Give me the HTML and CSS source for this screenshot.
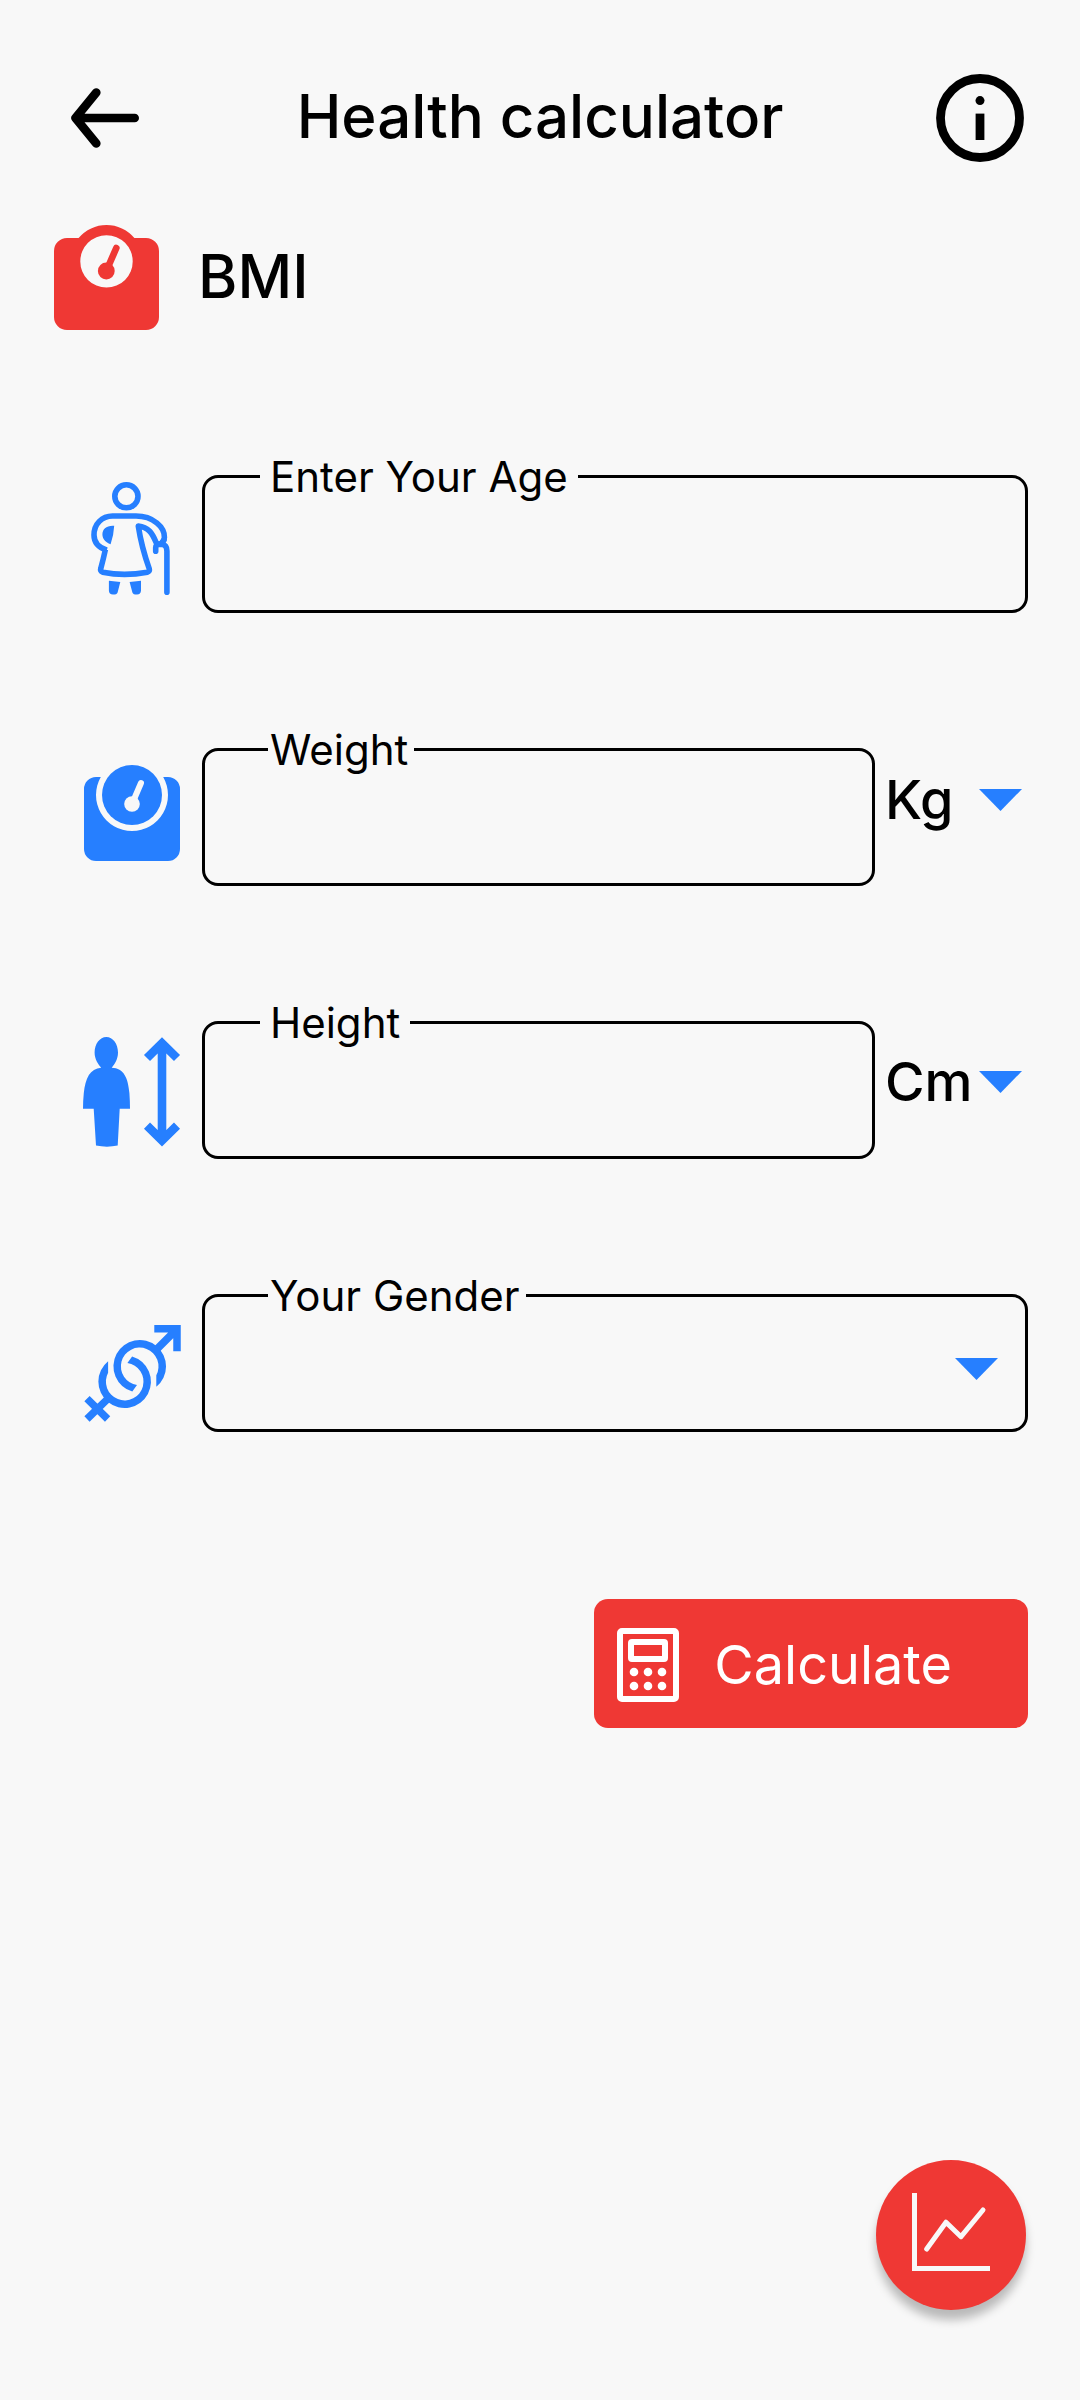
FILE: index.html
```html
<!DOCTYPE html>
<html lang="en">
<head>
<meta charset="utf-8">
<meta name="viewport" content="width=device-width, initial-scale=1">
<title>Health calculator</title>
<link rel="stylesheet" href="styles.css">
</head>
<body>
<div class="page">
  <header class="topbar">
    <button class="icon-button back" type="button" aria-label="Back">
      <svg width="68" height="60" viewBox="0 0 68 60" fill="none" stroke="currentColor" stroke-width="8.6" stroke-linecap="round" stroke-linejoin="round" aria-hidden="true"><path d="M63.7 30H4.5M25.3 4.5 4.5 30l20.8 25.5"/></svg>
    </button>
    <h1 class="title">Health calculator</h1>
    <button class="icon-button info" type="button" aria-label="Information">
      <svg width="88" height="88" viewBox="0 0 88 88" aria-hidden="true"><circle cx="44" cy="44" r="39.5" fill="none" stroke="currentColor" stroke-width="8.8"/><circle cx="44" cy="26.6" r="4.5"/><path d="M39.6 39.6h8.8V66h-8.8z"/></svg>
    </button>
  </header>

  <main class="content">
    <div class="section-head">
      <svg class="section-icon" width="105" height="105" viewBox="0 0 105 105" aria-hidden="true">
        <path fill="currentColor" fill-rule="evenodd" d="M13 13H24.6A36.5 36.5 0 0 1 80.4 13H92A13 13 0 0 1 105 26V92A13 13 0 0 1 92 105H13A13 13 0 0 1 0 92V26A13 13 0 0 1 13 13ZM52.5 10.2A26.2 26.2 0 1 0 52.5 62.6 26.2 26.2 0 1 0 52.5 10.2Z"/>
        <circle cx="52.3" cy="46" r="8.4" fill="currentColor"/>
        <path d="M52.3 46 62.3 23" stroke="currentColor" stroke-width="6.7" stroke-linecap="round"/>
      </svg>
      <h2 class="title">BMI</h2>
    </div>

    <form class="form">
      <div class="row">
        <svg class="row-icon" viewBox="0 0 120 138" fill="none" stroke="currentColor" stroke-width="5.6" stroke-linecap="round" stroke-linejoin="round" aria-hidden="true">
          <ellipse cx="54.4" cy="21.3" rx="11.6" ry="11.5"/>
          <path stroke-linecap="butt" d="M34.8 75.2C26.5 72.5 22 67 22 60C22 49 30 41 40.5 41H64C81 41 92.8 52 92.4 62.5C92 66 89.5 69.3 86.5 69.3C85.5 69.3 84.6 68.5 84 67.3C80.5 58.5 76.5 52 66.3 51Q69.5 72 77.2 93.6Q78 96.2 75.4 97.2Q52 101.5 30.8 97.2Q28 96 28.8 93.4Q31.5 83.5 33.4 74.5"/>
          <path d="M83.7 76.3V72.5Q83.8 69.5 87 69.5H90.2Q94.9 70 94.9 76V117.3M89 69 92 65"/>
          <path fill="currentColor" stroke="none" d="M42.2 50.8Q41.8 60 38.6 69.2C33.5 67.5 30.4 63.6 30.4 59.5C30.4 54 34.3 50.3 42.2 50.8ZM36.9 105.8 48.3 107 45.6 117.4Q44.7 119.6 41 119.6Q37 119.6 36.9 115.5ZM57.6 107 69 105.8V115.5Q68.8 119.6 65 119.6Q61.3 119.6 60.4 117.4Z"/>
        </svg>
        <fieldset class="field">
          <legend class="notch notch-wide"><label for="age">Enter Your Age</label></legend>
          <input class="control" id="age" type="text" inputmode="numeric">
        </fieldset>
      </div>

      <div class="row row-unit">
        <svg class="row-icon" viewBox="0 0 120 138" aria-hidden="true">
          <path fill="currentColor" d="M24 29H28.8A36 36 0 1 0 91.2 29H96A12 12 0 0 1 108 41V101A12 12 0 0 1 96 113H24A12 12 0 0 1 12 101V41A12 12 0 0 1 24 29Z"/>
          <circle cx="60" cy="47" r="30" fill="currentColor"/>
          <circle class="dial-mark" cx="60" cy="56" r="7.8"/>
          <path class="dial-needle" d="M60 56 69 35"/>
        </svg>
        <fieldset class="field">
          <legend class="notch notch-tight"><label for="weight">Weight</label></legend>
          <input class="control" id="weight" type="text" inputmode="decimal">
        </fieldset>
        <div class="unit unit-weight">
          <select class="unit-select" aria-label="Weight unit"><option>Kg</option><option>Lb</option></select>
          <svg class="caret" viewBox="0 0 43 22" aria-hidden="true"><path d="M0 0H43L21.5 22Z"/></svg>
        </div>
      </div>

      <div class="row row-unit">
        <svg class="row-icon" viewBox="0 0 120 138" fill="currentColor" aria-hidden="true">
          <path d="M34.3 16C41 16 46 23 46 31.5C46 38 42.8 43.2 39.7 46.7C52 47 56 57 57.4 72Q58 80 58 87.7H47.7L45.7 124.5Q35 126.8 24 124.5L21.7 87.7H11Q11 80 11.8 72C13.4 57 18 47.5 29.2 46.7C26 43.2 22.6 38 22.6 31.5C22.6 23 27.8 16 34.3 16Z"/>
          <path fill="none" stroke="currentColor" stroke-width="8.6" d="M90 22V119M75 37 90 22.2 105 37M75 104.6 90 119.4 105 104.6"/>
        </svg>
        <fieldset class="field">
          <legend class="notch notch-wide"><label for="height">Height</label></legend>
          <input class="control" id="height" type="text" inputmode="decimal">
        </fieldset>
        <div class="unit unit-height">
          <select class="unit-select" aria-label="Height unit"><option>Cm</option><option>Ft</option></select>
          <svg class="caret" viewBox="0 0 43 22" aria-hidden="true"><path d="M0 0H43L21.5 22Z"/></svg>
        </div>
      </div>

      <div class="row">
        <svg class="row-icon" viewBox="0 0 120 138" fill="none" stroke="currentColor" stroke-width="7.5" aria-hidden="true">
          <path fill="currentColor" stroke="none" d="M84.3 92.8A26.3 26.3 0 1 0 60.3 97.6L65 91A18.8 18.8 0 1 1 84.3 81.2Z"/>
          <path fill="currentColor" stroke="none" transform="rotate(180 60.2 80)" d="M84.3 92.8A26.3 26.3 0 1 0 60.3 97.6L65 91A18.8 18.8 0 1 1 84.3 81.2Z"/>
          <path d="M85 55 105 35M82.3 34.8H105V57.3M36 104.6 15 125M15 104.6 35.6 125"/>
        </svg>
        <fieldset class="field">
          <legend class="notch notch-tight"><label for="gender">Your Gender</label></legend>
          <select class="control" id="gender"><option value=""></option><option>Female</option><option>Male</option></select>
          <svg class="caret" viewBox="0 0 43 22" aria-hidden="true"><path d="M0 0H43L21.5 22Z"/></svg>
        </fieldset>
      </div>

      <button class="calculate" type="submit">
        <svg width="62" height="74" viewBox="0 0 62 74" fill="none" stroke="currentColor" stroke-width="6" stroke-linejoin="round" aria-hidden="true">
          <rect x="3" y="3" width="56" height="68" rx="2"/>
          <rect x="14" y="14" width="34" height="17" rx="1"/>
          <g fill="currentColor" stroke="none"><circle cx="17" cy="44" r="4.3"/><circle cx="31" cy="44" r="4.3"/><circle cx="45" cy="44" r="4.3"/><circle cx="17" cy="58" r="4.3"/><circle cx="31" cy="58" r="4.3"/><circle cx="45" cy="58" r="4.3"/></g>
        </svg>
        <span>Calculate</span>
      </button>
    </form>
  </main>

  <button class="fab" type="button" aria-label="History chart">
    <svg width="150" height="150" viewBox="0 0 150 150" fill="none" stroke="currentColor" stroke-width="5" aria-hidden="true"><path d="M38.5 33V108.5H114"/><path stroke-linecap="round" stroke-linejoin="round" d="M50.7 89 70 62.2 85 76.7 107 50"/></svg>
  </button>
</div>
</body>
</html>
```

FILE: styles.css
```css
:root {
  --bg: #f8f8f8;
  --ink: #000;
  --red: #ef3834;
  --blue: #267fff;
}

* {
  box-sizing: border-box;
}

body {
  margin: 0;
  background: var(--bg);
  color: var(--ink);
  font-family: Inter, "Liberation Sans", sans-serif;
}

button,
input,
select {
  margin: 0;
  padding: 0;
  border: 0;
  background: none;
  color: inherit;
  font: inherit;
}

button,
select {
  cursor: pointer;
}

svg {
  display: block;
}

.page {
  display: flex;
  flex-direction: column;
  min-height: 100vh;
  padding: 74px 52px 90px;
}

.topbar {
  display: grid;
  grid-template-columns: 1fr auto 1fr;
  align-items: center;
  padding: 0 4px;
}

.icon-button {
  display: block;
}

.back {
  justify-self: start;
  margin-left: 15px;
}

.info {
  justify-self: end;
}

.title {
  margin: 0;
  padding-bottom: 4px;
  font-size: 60px;
  font-weight: 500;
  line-height: 72px;
}

.section-head {
  display: flex;
  align-items: center;
  gap: 39px;
  margin-top: 63px;
  padding-left: 2px;
}

.section-icon {
  flex: none;
  color: var(--red);
}

.form {
  display: flex;
  flex-direction: column;
  gap: 111px;
  margin-top: 121px;
  padding-left: 20px;
}

.row {
  display: grid;
  grid-template-columns: 120px 1fr;
  column-gap: 10px;
  align-items: end;
}

.row-unit {
  grid-template-columns: 120px 1fr 143px;
}

.row-icon {
  width: 120px;
  height: 138px;
  color: var(--blue);
}

.dial-mark {
  fill: var(--bg);
}

.dial-needle {
  stroke: var(--bg);
  stroke-width: 6;
  stroke-linecap: round;
}

.field {
  position: relative;
  min-width: 0;
  margin: 0;
  padding: 0;
  border: 3px solid var(--ink);
  border-radius: 16px;
}

.notch {
  font-size: 42px;
  font-weight: 400;
  line-height: 51px;
}

.notch-wide {
  margin-left: 55px;
  padding: 0 10px;
}

.notch-tight {
  margin-left: 63px;
  padding: 0 6px 0 2px;
}

.control {
  display: block;
  width: 100%;
  height: 108px;
  padding: 0 65px 20px;
  border-radius: 12px;
  appearance: none;
  font-size: 42px;
  outline-offset: -6px;
}

.caret {
  position: absolute;
  top: 50%;
  right: 6px;
  width: 43px;
  height: 22px;
  transform: translateY(-50%);
  fill: var(--blue);
  pointer-events: none;
}

.field .caret {
  top: 37px;
  right: 27px;
  transform: none;
}

.unit {
  position: relative;
  align-self: start;
}

.unit-weight {
  margin-top: 43px;
}

.unit-height {
  margin-top: 52px;
}

.unit-select {
  display: block;
  width: 100%;
  height: 66px;
  appearance: none;
  font-size: 54px;
  font-weight: 500;
  line-height: 66px;
}

.calculate {
  display: flex;
  align-self: flex-end;
  align-items: center;
  gap: 35px;
  margin-top: 56px;
  padding: 29px 76px 26px 23px;
  border-radius: 14px;
  background: var(--red);
  color: #fff;
  font-size: 54px;
  font-weight: 400;
  line-height: 74px;
}

.fab {
  align-self: flex-end;
  width: 150px;
  height: 150px;
  margin-top: auto;
  margin-right: 2px;
  border-radius: 50%;
  background: var(--red);
  color: var(--bg);
  box-shadow: 0 10px 10px rgba(0, 0, 0, 0.25);
}
```
